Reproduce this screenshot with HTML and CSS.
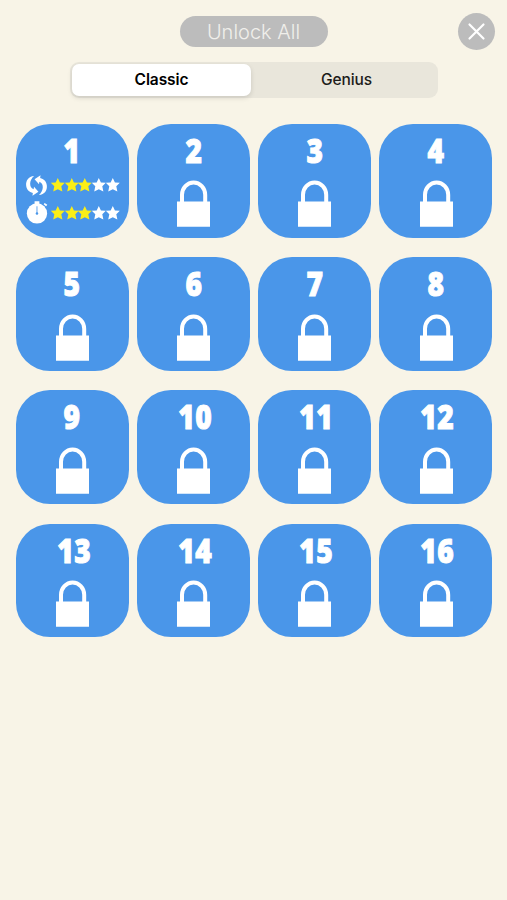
FILE: index.html
```html
<!DOCTYPE html>
<html lang="en">
<head>
<meta charset="utf-8">
<title>Levels</title>
<link rel="stylesheet" href="styles.css">
</head>
<body>
<svg class="defs" width="0" height="0" aria-hidden="true">
  <symbol id="lock" viewBox="0 0 33 47"><path d="M5 22V14.800a11.600 12.300 0 0 1 23.200 0V22" fill="none" stroke="#fff" stroke-width="4"/><path d="M0 21.500h33V46.700H0z" fill="#fff"/></symbol>
  <symbol id="star" viewBox="0 0 14 14" overflow="visible"><path d="M7-.3l2.200 4.600 5 .5-3.600 3.600 1.100 5.400L7 11.400l-4.700 2.400 1.100-5.400L-.2 4.800l5-.5z"/></symbol>
</svg>
<header class="top">
  <button class="unlock">Unlock All</button>
  <button class="close" aria-label="Close"><svg width="37" height="37" viewBox="0 0 37 37"><path d="M11.500 11.500l14 14M25.500 11.500l-14 14" fill="none" stroke="#fff" stroke-width="2.200" stroke-linecap="round"/></svg></button>
</header>
<nav class="tabs"><button class="tab active">Classic</button><button class="tab">Genius</button></nav>
<main class="levels">
  <section class="tile open">
    <span class="num">1</span>
    <div class="score">
      <svg class="icon" viewBox="0 0 24 24"><path d="M9.500 2C3.500 2.500.7 7 1.200 12c.4 4.200 3.200 7 7 7.800L7.800 22.600 14 18.600 9.400 13.200l-.4 2.600C3.800 13.800 4.500 6 9.500 2z" fill="#fff"/><path d="M14.500 22c6-.5 8.800-5 8.300-10-.4-4.200-3.200-7-7-7.800l.4-2.800L10 5.400l4.600 5.400.4-2.600c5.200 2 4.500 9.800-.5 13.800z" fill="#fff"/></svg>
      <div class="stars"><svg class="on"><use href="#star"/></svg><svg class="on"><use href="#star"/></svg><svg class="on"><use href="#star"/></svg><svg><use href="#star"/></svg><svg><use href="#star"/></svg></div>
    </div>
    <div class="score">
      <svg class="icon" viewBox="0 0 24 24"><circle cx="12.500" cy="13" r="10.600" fill="#fff"/><path d="M10 .3h5v3h-5zM20.500 2l2.800 2-1.300 1.600-2.500-2.100z" fill="#fff"/><path d="M12.500 5.500v7.500" stroke="#4a96e9" stroke-width=".9"/><circle cx="12.500" cy="13" r="1.300" fill="#4a96e9"/></svg>
      <div class="stars"><svg class="on"><use href="#star"/></svg><svg class="on"><use href="#star"/></svg><svg class="on"><use href="#star"/></svg><svg><use href="#star"/></svg><svg><use href="#star"/></svg></div>
    </div>
  </section>
  <section class="tile"><span class="num">2</span><svg class="lock"><use href="#lock"/></svg></section>
  <section class="tile"><span class="num">3</span><svg class="lock"><use href="#lock"/></svg></section>
  <section class="tile"><span class="num">4</span><svg class="lock"><use href="#lock"/></svg></section>
  <section class="tile"><span class="num">5</span><svg class="lock"><use href="#lock"/></svg></section>
  <section class="tile"><span class="num">6</span><svg class="lock"><use href="#lock"/></svg></section>
  <section class="tile"><span class="num">7</span><svg class="lock"><use href="#lock"/></svg></section>
  <section class="tile"><span class="num">8</span><svg class="lock"><use href="#lock"/></svg></section>
  <section class="tile"><span class="num">9</span><svg class="lock"><use href="#lock"/></svg></section>
  <section class="tile"><span class="num wide">10</span><svg class="lock"><use href="#lock"/></svg></section>
  <section class="tile"><span class="num wide">11</span><svg class="lock"><use href="#lock"/></svg></section>
  <section class="tile"><span class="num wide">12</span><svg class="lock"><use href="#lock"/></svg></section>
  <section class="tile"><span class="num wide">13</span><svg class="lock"><use href="#lock"/></svg></section>
  <section class="tile"><span class="num wide">14</span><svg class="lock"><use href="#lock"/></svg></section>
  <section class="tile"><span class="num wide">15</span><svg class="lock"><use href="#lock"/></svg></section>
  <section class="tile"><span class="num wide">16</span><svg class="lock"><use href="#lock"/></svg></section>
</main>
</body>
</html>
```
FILE: styles.css
```css
* { box-sizing: border-box; }
body { margin: 0; min-height: 900px; background: #f8f4e7; font-family: Inter, "Liberation Sans", sans-serif; }
button { border: 0; padding: 0; margin: 0; background: none; font: inherit; }
svg { display: block; }
.defs { position: absolute; }
.top { display: grid; grid-template-columns: 1fr 148px 1fr; align-items: center; height: 62px; padding: 1px 12px 0; }
.unlock { grid-column: 2; height: 31px; border-radius: 16px; background: #bcbcbc; color: #f0efeb; font-size: 20px; font-weight: 350; line-height: 31px; letter-spacing: 0; padding-top: 1px; }
.close { justify-self: end; width: 37px; height: 37px; border-radius: 50%; background: #bcbcbc; }
.tabs { display: grid; grid-template-columns: 1fr 1fr; width: 368px; height: 35.500px; margin-left: 70px; padding: 2px; border-radius: 9px; background: #e9e6db; }
.tab { padding: 0 0 0 3px; border-radius: 7px; color: #1c1c1a; font-size: 15.500px; font-weight: 500; letter-spacing: -.1px; }
.tab.active { width: 179px; padding-left: 0; background: #fff; color: #000; font-weight: 600; box-shadow: 0 2px 5px rgba(0,0,0,.13); }
.levels { display: grid; grid-template-columns: repeat(4, 113.500px); gap: 19.600px 7.600px; padding: 26.800px 0 0 15.500px; }
.tile { display: flex; flex-direction: column; align-items: center; height: 113.500px; padding-top: 13px; border-radius: 34px; background: #4a96e9; }
.num { height: 27px; line-height: 27px; color: #fff; font-family: "Open Sans", sans-serif; font-size: 33.500px; font-weight: 800; -webkit-text-stroke: 1px #fff; transform: scaleX(.84); }
.num.wide { margin-left: 4px; letter-spacing: .6px; }
.lock { width: 33px; height: 47px; margin: 16.200px 0 0 1px; }
.score { display: flex; align-items: center; gap: 3px; height: 27.500px; }
.open .num { margin-bottom: 7px; }
.icon { width: 23px; height: 23px; }
.stars { display: flex; }
.stars svg { width: 13.600px; height: 14px; overflow: visible; fill: #fff; }
.stars use { width: 14px; height: 14px; }
.stars .on { fill: #fbee16; }
```
